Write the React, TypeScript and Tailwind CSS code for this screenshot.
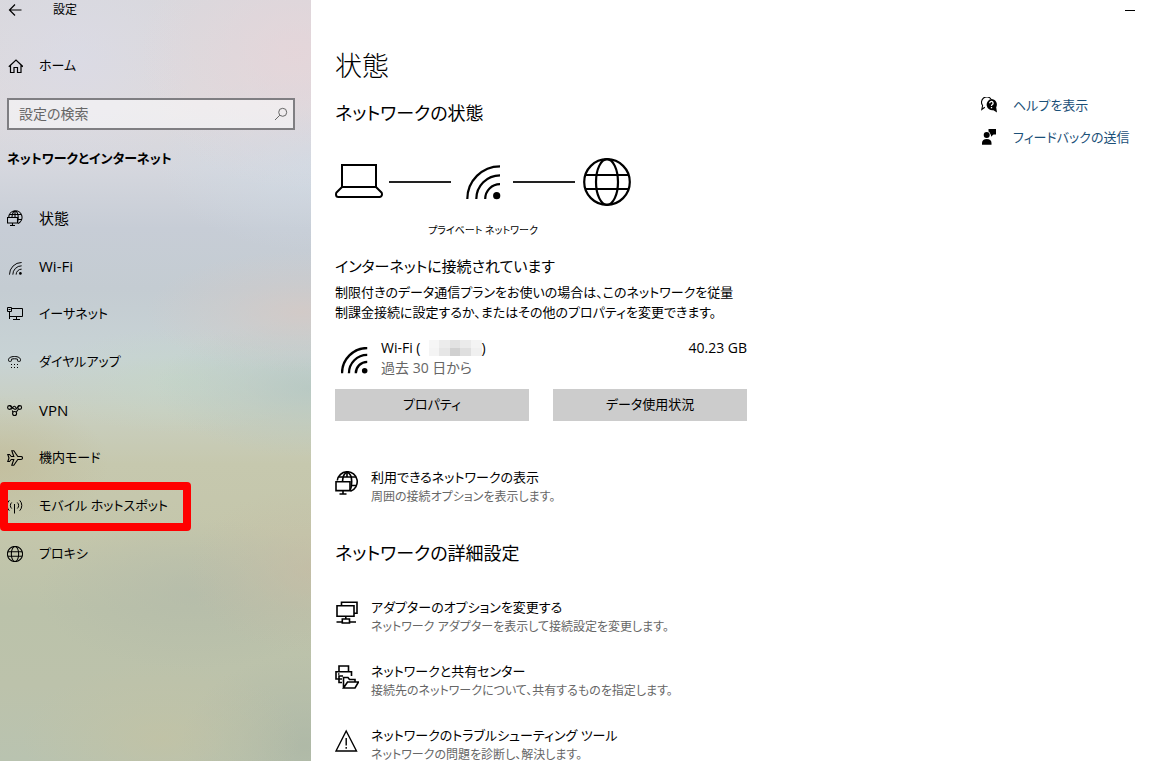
import type { ReactNode } from "react";

const fontStack =
  "font-['Open_Sans','Noto_Sans_CJK_JP',sans-serif] [font-feature-settings:'palt']";

type IconProps = { className?: string };

function Svg({
  box,
  className,
  width = 1,
  children,
}: {
  box: string;
  className?: string;
  width?: number;
  children: ReactNode;
}) {
  return (
    <svg
      viewBox={box}
      className={className}
      fill="none"
      stroke="currentColor"
      strokeWidth={width}
      aria-hidden="true"
    >
      {children}
    </svg>
  );
}

function BackIcon() {
  return (
    <Svg box="0 0 16 16" className="size-4" width={1.2}>
      <path d="M14.5 8H2.5M8 2.5 2.5 8 8 13.5" />
    </Svg>
  );
}

function HomeIcon() {
  return (
    <Svg box="0 0 16 16" className="size-4" width={1.2}>
      <path d="M1.8 8.7 9 2l7 6.700M3.500 7.300v7.200h3.500V9.500h3.500v5H14V7.300" />
    </Svg>
  );
}

function SearchIcon() {
  return (
    <Svg box="0 0 16 16" className="size-4 shrink-0 text-[#666]" width={1}>
      <circle cx="9.7" cy="6.3" r="4" />
      <path d="M6.8 9.200 2 14" />
    </Svg>
  );
}

function GlobeMonitorIcon() {
  return (
    <Svg box="0 0 24 24" className="size-6" width={1.6}>
      <path d="M2.3 9.5A10 10 0 1 1 15.5 20.2" />
      <path d="M7.5 10.5C7.8 5.5 9.5 2 12 1.2c2.8.8 4.7 4.8 4.7 9.5 0 3.8-.5 6.8-1.700 9" />
      <path d="M3.2 6H21M16.5 14.5h5M12 1.200V6" />
      <path d="M1 10.800h14V19.600H1zM8 19.600V23M4.500 23h7" />
    </Svg>
  );
}

function SmallGlobeMonitorIcon() {
  return (
    <Svg box="0 0 16 16" className="size-4" width={1.100}>
      <path d="M1.800 7A6.600 6.600 0 1 1 11 13.400M2.500 4.500h11.500M11 9.500h3.800M5 7c.2-3 1.300-5.500 3-6.200 2 .8 3.200 3.500 3.200 6.700 0 2-.2 3.500-.7 4.700M8 .8V7" />
      <path d="M.5 7.500h10v5.500H.5zM5.500 13v2.500M3 15.500h5" />
    </Svg>
  );
}

function WifiIcon({ className = "size-4", width = 2.6 }: IconProps & { width?: number }) {
  return (
    <Svg box="7 8 35 35" className={className} width={width}>
      <path d="M8.3 42A32.7 32.7 0 0 1 41 9.3M17.3 42A23.7 23.7 0 0 1 41 18.3M26.2 42A14.8 14.8 0 0 1 41 27.2" />
      <circle cx="37.7" cy="38.7" r="3.6" fill="currentColor" stroke="none" />
    </Svg>
  );
}

function EthernetIcon() {
  return (
    <Svg box="0 0 16 16" className="size-4">
      <path d="M4.5 2.5h11v8h-13M.5 1.500h4v4h-4zM2.500 5.500v7.500M9.500 10.500v3M6 13.500h7M1.500 3.500h2" />
    </Svg>
  );
}

function DialupIcon() {
  return (
    <Svg box="0 0 16 16" className="size-4">
      <path d="M1.500 6.500C1 4 3.800 2.500 7.500 2.500s6.500 1.500 6 4c-.1.700-.3.800-.8.800h-1.400c-.6 0-.8-.2-.8-.8V5.200c-2-.6-4-.6-6 0v1.300c0 .6-.2.800-.8.800H2.300c-.5 0-.7-.1-.8-.8z" />
      <path d="M4 10.500h1M7 10.500h1M10 10.500h1M4 13.500h1M7 13.500h1M10 13.500h1" />
    </Svg>
  );
}

function VpnIcon() {
  return (
    <Svg box="0 0 16 16" className="size-4" width={1.100}>
      <circle cx="2.500" cy="5.500" r="1.900" />
      <circle cx="12.700" cy="5.500" r="1.900" />
      <circle cx="7.600" cy="11.500" r="2" />
      <path d="M2.500 3.600C5 3.400 5.500 7.800 8.500 7.300c2-.4 2-3.600 4.200-3.700M3.500 7.200C6 7.200 5.500 4 7.500 4.300c1.200.2 1 1.200 1.700 1.700M6 10.200 5.300 8.500M9.200 10.300 11.500 7" />
    </Svg>
  );
}

function AirplaneIcon() {
  return (
    <Svg box="0 0 16 16" className="size-4" width={1.100}>
      <path d="M.8 4.500h1.700L4.300 6.500h2.500L4.800.8h2l4 5.700h3.200a1.500 1.500 0 0 1 0 3h-3.200l-4 5.700h-2l2-5.700H4.300L2.500 11.500H.8L2 8z" />
    </Svg>
  );
}

function HotspotIcon() {
  return (
    <Svg box="0 0 16 16" className="size-4">
      <path d="M7.500 6v9.500M4.700 4.500a4 4 0 0 0 0 6M10.300 4.500a4 4 0 0 1 0 6M2.300 2.300a7.500 7.500 0 0 0 0 10.400M12.700 2.300a7.500 7.500 0 0 1 0 10.400" />
    </Svg>
  );
}

function GlobeIcon({ className = "size-4", width = 3.2 }: IconProps & { width?: number }) {
  return (
    <Svg box="0 0 48 48" className={className} width={width}>
      <circle cx="24" cy="24" r="22.8" />
      <ellipse cx="24" cy="24" rx="11" ry="22.8" />
      <path d="M2.5 17h43M2.500 31h43" />
    </Svg>
  );
}

function LaptopIcon() {
  return (
    <Svg box="0 0 48 48" className="size-12" width={2}>
      <path d="M7 29V7h34v22M7 29h34l5.500 5.500c.5.5.5 1 .5 2a2.500 2.500 0 0 1-2.500 2.500h-41A2.500 2.500 0 0 1 1 36.500c0-1 0-1.500.5-2z" />
    </Svg>
  );
}

function AdapterIcon() {
  return (
    <Svg box="0 0 24 24" className="size-6" width={1.6}>
      <path d="M2 4.800h17v10.400H2zM6.500 4.500V1.200h15.500v11H19M10.800 15.200V18M7.300 18h7.200v4H7.300zM1.500 21h5.500M14.800 21H21" />
    </Svg>
  );
}

function SharingIcon() {
  return (
    <Svg box="0 0 24 24" className="size-6" width={1.6}>
      <path d="M4 6.800V1h9.500v5.800M7 14H1V6.800h15.500V11M4 14v-3h4M4 14v3.500h3M3 9h1.500" />
      <path d="M8.500 23V12.500h4.500l1.500 2h5.500v2.500M8.500 23l4-6H23.500l-3.500 6z" />
    </Svg>
  );
}

function WarningIcon() {
  return (
    <Svg box="0 0 24 24" className="size-6" width={1.4}>
      <path d="M11.200 2 21.500 22H1zM11.200 9v7.500M11.200 18v1.800" />
    </Svg>
  );
}

function HelpIcon() {
  return (
    <Svg box="0 0 16 16" className="size-4" width={1.1}>
      <path d="M3.800 10.200.8 12.500 1.600 8.500A5 5 0 1 1 10 2" />
      <path
        d="M10.300 2a5.600 5.600 0 0 1 4.900 8.300L16 15.500l-3.600-2.300A5.600 5.600 0 1 1 10.300 2z"
        fill="currentColor"
        stroke="none"
      />
      <path
        d="M8.700 6.200a1.700 1.700 0 1 1 2.700 1.300c-.7.400-.9.700-.9 1.400M10.500 10v1.300"
        stroke="white"
        strokeWidth="1.300"
      />
    </Svg>
  );
}

function FeedbackIcon() {
  return (
    <Svg box="0 0 16 16" className="size-4">
      <g fill="currentColor" stroke="none">
        <circle cx="5.700" cy="6" r="3" />
        <path d="M1 15.800V14c0-2.500 2-4 4.800-4s4.700 1.500 4.700 4v1.800z" />
        <path d="M7.500 0H15v5.500h-2.500L10 7.800V5.500H9.300C9.300 4 8.600 3 7.500 2.500z" />
      </g>
    </Svg>
  );
}

const navItems = [
  { label: "状態", icon: <SmallGlobeMonitorIcon />, size: "text-[15px]" },
  { label: "Wi-Fi", icon: <WifiIcon className="mt-1 ml-[2px] size-[13px]" />, size: "text-[15px]" },
  { label: "イーサネット", icon: <EthernetIcon />, size: "text-[13px]" },
  { label: "ダイヤルアップ", icon: <DialupIcon />, size: "text-[13px]" },
  { label: "VPN", icon: <VpnIcon />, size: "text-[15px]" },
  { label: "機内モード", icon: <AirplaneIcon />, size: "text-[13px]" },
  { label: "モバイル ホットスポット", icon: <HotspotIcon />, size: "text-[13px]", marked: true },
  { label: "プロキシ", icon: <GlobeIcon />, size: "text-[13px]" },
];

const advanced = [
  {
    title: "アダプターのオプションを変更する",
    note: "ネットワーク アダプターを表示して接続設定を変更します。",
    icon: <AdapterIcon />,
  },
  {
    title: "ネットワークと共有センター",
    note: "接続先のネットワークについて、共有するものを指定します。",
    icon: <SharingIcon />,
  },
  {
    title: "ネットワークのトラブルシューティング ツール",
    note: "ネットワークの問題を診断し、解決します。",
    icon: <WarningIcon />,
  },
];

function Sidebar() {
  return (
    <aside
      className="w-[311px] shrink-0 overflow-hidden bg-[radial-gradient(ellipse_50%_18%_at_95%_7%,#e8d4d8b0_0%,#e8d4d850_50%,transparent_100%),radial-gradient(ellipse_40%_15%_at_24%_8%,#dadcea90_0%,#dadcea40_50%,transparent_100%),radial-gradient(ellipse_50%_12%_at_100%_21%,#cfdbe5c0_0%,#cfdbe550_50%,transparent_100%),radial-gradient(ellipse_50%_8%_at_97%_41%,#d6c9c4c0_0%,#d6c9c450_50%,transparent_100%),radial-gradient(ellipse_50%_9%_at_100%_51%,#b4c7c2c0_0%,#b4c7c250_50%,transparent_100%),radial-gradient(ellipse_45%_7%_at_58%_50%,#c4d6c8b0_0%,#c4d6c850_50%,transparent_100%),radial-gradient(ellipse_35%_9%_at_0%_61%,#c2bb98b0_0%,#c2bb9850_50%,transparent_100%),radial-gradient(ellipse_40%_11%_at_100%_75%,#c6bba4a0_0%,#c6bba440_50%,transparent_100%),radial-gradient(ellipse_50%_10%_at_62%_78%,#b3baaaa0_0%,#b3baaa50_50%,transparent_100%),radial-gradient(ellipse_45%_10%_at_52%_97%,#c3c2a3b0_0%,#c3c2a350_50%,transparent_100%),radial-gradient(ellipse_40%_12%_at_98%_98%,#adb7a5d0_0%,#adb7a560_50%,transparent_100%),linear-gradient(180deg,#d9d8dd_0%,#dedadd_14%,#d5d7de_22%,#c7cdd6_30%,#c4ccd2_38%,#c8d3d5_47%,#c9cfc0_54%,#c6c8ae_61%,#c4c6ab_70%,#bbc2aa_80%,#bcc2ab_90%,#b9c3b0_100%)]"
    >
      <div className="flex h-5 items-center pl-[7px]">
        <button type="button" aria-label="戻る">
          <BackIcon />
        </button>
        <span className="ml-[30px] text-xs leading-5">設定</span>
      </div>
      <a href="#home" className="mt-[22px] flex h-12 items-center gap-4 pl-[7px] text-[13px]">
        <HomeIcon />
        ホーム
      </a>
      <label className="mx-4 mt-2 ml-[7px] flex h-8 items-center border-2 border-[#7f7e82] bg-white/50 pr-1 pl-[10px]">
        <input
          type="text"
          aria-label="設定の検索"
          placeholder="設定の検索"
          className="min-w-0 flex-1 bg-transparent text-sm outline-none placeholder:text-[#666]"
        />
        <SearchIcon />
      </label>
      <h2 className="mt-2 flex h-[42px] items-center pl-[7px] text-[13px] font-bold">
        ネットワークとインターネット
      </h2>
      <nav className="mt-[14px]">
        <ul>
          {navItems.map((item) => (
            <li key={item.label} className="relative">
              <a href="#nav" className={`flex h-12 items-center pl-[7px] ${item.size}`}>
                <span className="flex w-8 shrink-0">{item.icon}</span>
                {item.label}
              </a>
              {item.marked && (
                <span className="pointer-events-none absolute top-0 left-0 h-[49px] w-[191px] rounded border-8 border-[#ff0000]" />
              )}
            </li>
          ))}
        </ul>
      </nav>
    </aside>
  );
}

function LinkItem({ title, note, icon }: { title: string; note: string; icon: ReactNode }) {
  return (
    <a href="#item" className="flex gap-3 whitespace-nowrap">
      <span className="mt-1 shrink-0">{icon}</span>
      <span>
        <span className="block text-[13px] leading-5">{title}</span>
        <span className="block text-xs leading-5 text-[#666]">{note}</span>
      </span>
    </a>
  );
}

function MaskedName() {
  return (
    <span className="ml-2 grid h-4 w-[53px] grid-cols-5" aria-hidden="true">
      <span className="bg-[#f6f6f6]" />
      <span className="bg-[#ececec]" />
      <span className="bg-[#e2e2e2]" />
      <span className="bg-[#ebebeb]" />
      <span className="bg-[#f4f4f4]" />
      <span className="bg-[#f4f4f4]" />
      <span className="bg-[#e6e6e6]" />
      <span className="bg-[#d0d0d0]" />
      <span className="bg-[#dfdfdf]" />
      <span className="bg-[#f0f0f0]" />
    </span>
  );
}

function Diagram() {
  return (
    <div className="mt-[31px] w-[296px]">
      <div className="flex items-center">
        <LaptopIcon />
        <span className="mr-2 ml-[6px] h-[2px] flex-1 bg-[#222]" />
        <span className="flex size-12 items-center justify-center">
          <WifiIcon className="size-[35px]" width={2.2} />
        </span>
        <span className="mr-2 ml-[6px] h-[2px] flex-1 bg-[#222]" />
        <GlobeIcon className="size-12" width={2.2} />
      </div>
      <p className="mt-[14px] text-center text-[10px] leading-5">プライベート ネットワーク</p>
    </div>
  );
}

export default function App() {
  return (
    <div className={`flex h-screen overflow-hidden bg-white text-black ${fontStack}`}>
      <Sidebar />
      <div className="flex min-w-0 flex-1 flex-col">
        <div className="flex h-5 shrink-0 items-center justify-end pr-[34px]">
          <button type="button" aria-label="最小化" className="flex h-5 w-[10px] items-center">
            <span className="h-px w-full bg-black" />
          </button>
        </div>
        <div className="flex min-h-0 flex-1 justify-between overflow-y-auto pr-6 pl-6 [scrollbar-width:none]">
          <main className="w-[412px]">
            <h1 className="mt-7 text-[27px] leading-9 font-light">状態</h1>
            <h2 className="mt-[15px] text-lg leading-7">ネットワークの状態</h2>
            <Diagram />
            <h3 className="mt-4 text-[15px] leading-5">インターネットに接続されています</h3>
            <p className="mt-[6px] text-[13px] leading-5 whitespace-nowrap">
              制限付きのデータ通信プランをお使いの場合は、このネットワークを従量
              <br />
              制課金接続に設定するか、またはその他のプロパティを変更できます。
            </p>
            <div className="mt-4 flex text-sm leading-5">
              <span className="mt-[9px] mr-[13px] ml-[6px]">
                <WifiIcon className="size-[27px]" width={3} />
              </span>
              <div className="flex-1">
                <p className="flex items-center">
                  Wi-Fi (
                  <MaskedName />)
                </p>
                <p className="text-[#666]">過去 30 日から</p>
              </div>
              <p>40.23 GB</p>
            </div>
            <div className="mt-[11px] grid grid-cols-2 gap-6">
              <button type="button" className="h-8 bg-[#ccc] text-[13px]">
                プロパティ
              </button>
              <button type="button" className="h-8 bg-[#ccc] text-[13px]">
                データ使用状況
              </button>
            </div>
            <div className="mt-[46px]">
              <LinkItem
                title="利用できるネットワークの表示"
                note="周囲の接続オプションを表示します。"
                icon={<GlobeMonitorIcon />}
              />
            </div>
            <h2 className="mt-8 text-lg leading-7">ネットワークの詳細設定</h2>
            <div className="mt-[30px] grid gap-6">
              {advanced.map((item) => (
                <LinkItem key={item.title} {...item} />
              ))}
            </div>
          </main>
          <aside className="mt-[75px] grid w-[164px] content-start gap-3 text-[13px] leading-5 text-[#1b5078]">
            <a href="#help" className="flex items-center gap-4 whitespace-nowrap">
              <span className="text-black">
                <HelpIcon />
              </span>
              ヘルプを表示
            </a>
            <a href="#feedback" className="flex items-center gap-4 whitespace-nowrap">
              <span className="text-black">
                <FeedbackIcon />
              </span>
              フィードバックの送信
            </a>
          </aside>
        </div>
      </div>
    </div>
  );
}
